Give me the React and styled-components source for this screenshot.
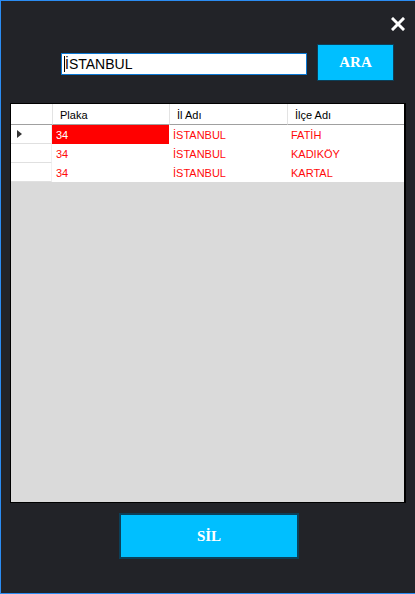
import React from "react";
import styled, { createGlobalStyle } from "styled-components";

const GlobalStyle = createGlobalStyle`
  html, body {
    margin: 0;
    padding: 0;
    background: #222328;
  }
  * {
    box-sizing: border-box;
  }
`;

const Pencere = styled.div`
  width: 415px;
  height: 594px;
  background-color: #222328;
  border-top: 1px solid #2b8cf2;
  border-left: 1px solid #2b8cf2;
  border-bottom: 1px solid #2b8cf2;
  display: flex;
  flex-direction: column;
  font-family: "Liberation Sans", Arial, sans-serif;
`;

const UstBar = styled.div`
  display: flex;
  justify-content: flex-end;
  padding: 16px 10px 0 0;
  height: 29px;
`;

const KapatButon = styled.div`
  width: 14px;
  height: 14px;
  cursor: pointer;
`;

const AramaSatiri = styled.div`
  display: flex;
  align-items: flex-start;
  margin-top: 14px;
  padding-left: 60px;
  gap: 10px;
`;

const MetinKutusu = styled.div`
  width: 246px;
  height: 22px;
  margin-top: 9px;
  background: #fff;
  border: 1px solid #0a78d4;
  display: flex;
  align-items: center;
  padding-left: 2px;
  font-size: 14px;
  color: #000;
`;

const Imlec = styled.span`
  display: inline-block;
  width: 1px;
  height: 16px;
  background: #000;
`;

const MaviButon = styled.button`
  width: ${(p) => p.$w}px;
  height: ${(p) => p.$h}px;
  background-color: #00bfff;
  border: ${(p) => p.$b}px solid #0c3f58;
  color: #fff;
  font-family: "Liberation Serif", "Times New Roman", serif;
  font-weight: bold;
  font-size: 15px;
  padding: 0;
  cursor: pointer;
`;

const Tablo = styled.div`
  margin: 22px 0 0 9px;
  width: 396px;
  height: 400px;
  border: 1px solid #000;
  border-right-width: 2px;
  background: #dadada;
  display: flex;
  flex-direction: column;
`;

const Satir = styled.div`
  display: grid;
  grid-template-columns: 41px 117px 118px 117px;
  height: ${(p) => (p.$baslik ? 21 : 19)}px;
  background: #fff;
`;

const BaslikHucre = styled.div`
  font-size: 11px;
  color: #000;
  padding: 2px 0 0 ${(p) => (p.$ilk ? 0 : 7)}px;
  display: flex;
  align-items: center;
  border-left: ${(p) => (p.$ilk ? "none" : "1px solid #e3e3e3")};
  border-bottom: 1px solid #a0a0a0;
`;

const SatirBasi = styled.div`
  border-bottom: 1px solid #e0e0e0;
  border-right: 1px solid #f0f0f0;
  display: flex;
  align-items: center;
  padding-left: 6px;
`;

const Ok = styled.div`
  width: 0;
  height: 0;
  border-top: 4px solid transparent;
  border-bottom: 4px solid transparent;
  border-left: 5px solid #333;
`;

const Hucre = styled.div`
  font-size: 11px;
  color: ${(p) => (p.$secili ? "#fff" : "#ff0a0a")};
  background: ${(p) => (p.$secili ? "#ff0000" : "#fff")};
  padding-left: 4px;
  display: flex;
  align-items: center;
`;

const AltAlan = styled.div`
  display: flex;
  padding-left: 118px;
  margin-top: 10px;
`;

const kayitlar = [
  { plaka: "34", il: "İSTANBUL", ilce: "FATİH" },
  { plaka: "34", il: "İSTANBUL", ilce: "KADIKÖY" },
  { plaka: "34", il: "İSTANBUL", ilce: "KARTAL" },
];

export default function App() {
  return (
    <>
      <GlobalStyle />
      <Pencere>
        <UstBar>
          <KapatButon>
            <svg width="14" height="14" viewBox="0 0 14 14">
              <path d="M2 2 L12 12 M12 2 L2 12" stroke="#fff" strokeWidth="3" strokeLinecap="square" />
            </svg>
          </KapatButon>
        </UstBar>
        <AramaSatiri>
          <MetinKutusu>
            <Imlec />
            İSTANBUL
          </MetinKutusu>
          <MaviButon $w={77} $h={37} $b={1}>ARA</MaviButon>
        </AramaSatiri>
        <Tablo>
          <Satir $baslik>
            <BaslikHucre $ilk />
            <BaslikHucre>Plaka</BaslikHucre>
            <BaslikHucre>İl Adı</BaslikHucre>
            <BaslikHucre>İlçe Adı</BaslikHucre>
          </Satir>
          {kayitlar.map((k, i) => (
            <Satir key={i}>
              <SatirBasi>{i === 0 && <Ok />}</SatirBasi>
              <Hucre $secili={i === 0}>{k.plaka}</Hucre>
              <Hucre>{k.il}</Hucre>
              <Hucre>{k.ilce}</Hucre>
            </Satir>
          ))}
        </Tablo>
        <AltAlan>
          <MaviButon $w={180} $h={46} $b={2}>SİL</MaviButon>
        </AltAlan>
      </Pencere>
    </>
  );
}
